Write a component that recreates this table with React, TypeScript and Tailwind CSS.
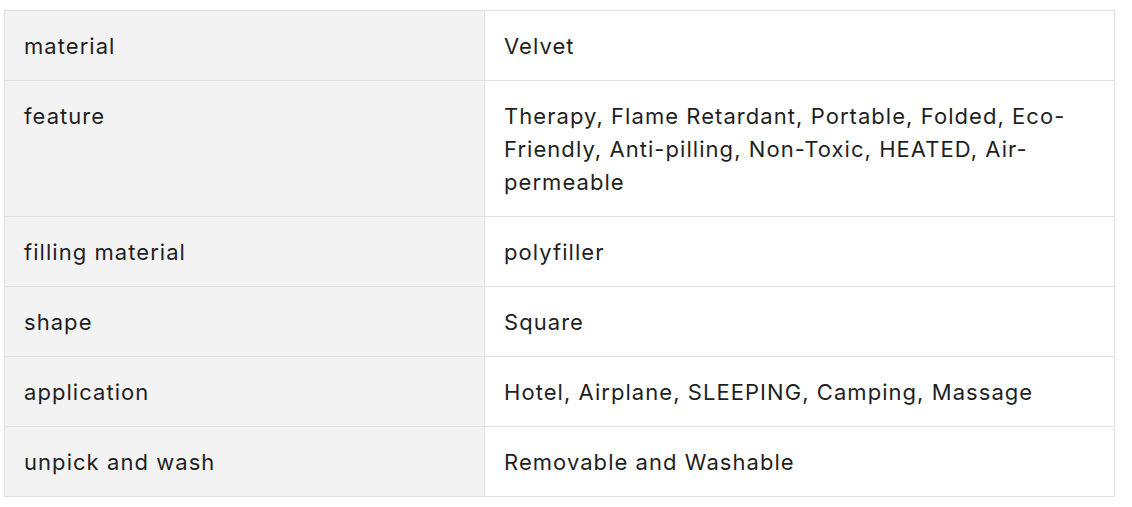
const rows: [string, string][] = [
  ["material", "Velvet"],
  ["feature", "Therapy, Flame Retardant, Portable, Folded, Eco-Friendly, Anti-pilling, Non-Toxic, HEATED, Air-permeable"],
  ["filling material", "polyfiller"],
  ["shape", "Square"],
  ["application", "Hotel, Airplane, SLEEPING, Camping, Massage"],
  ["unpick and wash", "Removable and Washable"],
];

export default function App() {
  return (
    <div className="bg-white pl-[4px] pt-[10px] font-['Inter',sans-serif] text-[22px] leading-[33px] tracking-[1.05px] text-[#1f1f1f]">
      <table className="w-[1111px] table-fixed border-collapse border border-[#e0e0e0]">
        <tbody>
          {rows.map(([k, v]) => (
            <tr key={k} className="border-b border-[#e0e0e0]">
              <td className="w-[480px] border-r border-[#e0e0e0] bg-[#f3f3f3] px-[19px] pt-[19px] pb-[17px] align-top">{k}</td>
              <td className="px-[19px] pt-[19px] pb-[17px] align-top">{v}</td>
            </tr>
          ))}
        </tbody>
      </table>
    </div>
  );
}
